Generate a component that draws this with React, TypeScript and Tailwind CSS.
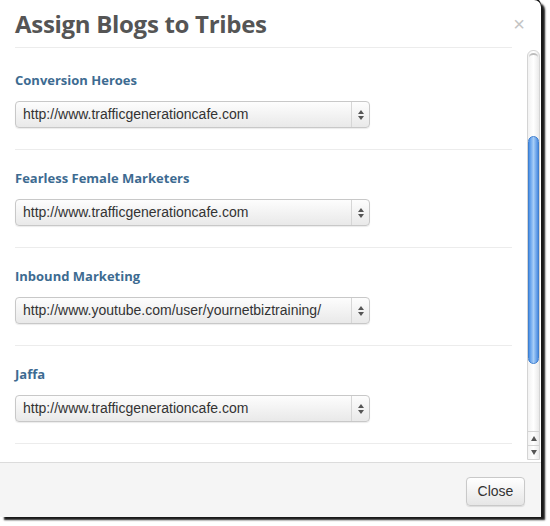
import { useState } from 'react'

const tribes = [
  { name: 'Conversion Heroes', url: 'http://www.trafficgenerationcafe.com' },
  { name: 'Fearless Female Marketers', url: 'http://www.trafficgenerationcafe.com' },
  { name: 'Inbound Marketing', url: 'http://www.youtube.com/user/yournetbiztraining/' },
  { name: 'Jaffa', url: 'http://www.trafficgenerationcafe.com' },
]

function SelectBox({ value }: { value: string }) {
  return (
    <div className="flex h-[27px] w-[355px] items-center rounded-[4px] border border-[#c8c8c8] bg-gradient-to-b from-[#fdfdfd] to-[#e9e9e9] shadow-[0_1px_1px_rgba(0,0,0,0.08)]">
      <span className="flex-1 truncate pl-[7px] font-['Liberation_Sans',Arial,sans-serif] text-[14px] text-[#333]">
        {value}
      </span>
      {/* up / down arrows */}
      <div className="flex h-full w-[18px] flex-col items-center justify-center gap-[2px] border-l border-[#d6d6d6]">
        <svg width="6" height="4" viewBox="0 0 6 4">
          <path d="M3 0L6 4H0z" fill="#555" />
        </svg>
        <svg width="6" height="4" viewBox="0 0 6 4">
          <path d="M0 0h6L3 4z" fill="#555" />
        </svg>
      </div>
    </div>
  )
}

function Scrollbar() {
  return (
    <div className="mt-[2px] flex h-[410px] w-[13px] flex-col rounded-t-[6px] border border-[#d4d4d4] bg-gradient-to-r from-[#f2f2f2] via-white to-[#eaeaea]">
      <div className="relative flex-1">
        {/* top cap */}
        <div className="mx-[1px] mt-[2px] h-[6px] rounded-t-full border-t-2 border-[#bdbdbd]" />
        {/* thumb */}
        <div className="absolute left-0 right-0 top-[85px] h-[228px] rounded-full border border-[#3f7fcf] bg-gradient-to-r from-[#4a90e6] via-[#a6cdf7] to-[#4a8be0]" />
      </div>
      <div className="flex h-[14px] items-center justify-center border-t border-[#d4d4d4]">
        <svg width="6" height="5" viewBox="0 0 6 5">
          <path d="M3 0L6 5H0z" fill="#555" />
        </svg>
      </div>
      <div className="flex h-[14px] items-center justify-center border-t border-[#d4d4d4]">
        <svg width="6" height="5" viewBox="0 0 6 5">
          <path d="M0 0h6L3 5z" fill="#555" />
        </svg>
      </div>
    </div>
  )
}

export default function App() {
  const [open, setOpen] = useState(true)

  return (
    <div className="h-[526px] w-[550px] bg-white">
      {open && (
        <div className="flex h-[517px] w-[541px] flex-col overflow-hidden rounded-tr-[7px] bg-white shadow-[0_-2px_0_#111,4px_3px_2px_rgba(0,0,0,0.9)]">
          {/* Header */}
          <div className="flex h-[47px] shrink-0 items-center justify-between pl-[15px] pr-[16px]">
            <h2 className="font-['Open_Sans',sans-serif] text-[24px] font-bold tracking-[-0.3px] text-[#555]">
              Assign Blogs to Tribes
            </h2>
            <button
              onClick={() => setOpen(false)}
              className="font-['Liberation_Sans',Arial,sans-serif] text-[20px] leading-none text-[#c4c4c4]"
            >
              ×
            </button>
          </div>
          <div className="ml-[15px] h-px w-[497px] shrink-0 bg-[#ececec]" />

          {/* Body */}
          <div className="flex h-[414px] shrink-0">
            <div className="w-[512px] overflow-hidden pl-[15px] pt-[4px]">
              {tribes.map((t) => (
                <div key={t.name} className="pt-[20px]">
                  <div className="font-['Open_Sans',sans-serif] text-[13px] font-bold leading-[16px] text-[#3d6b91]">
                    {t.name}
                  </div>
                  <div className="mt-[13px]">
                    <SelectBox value={t.url} />
                  </div>
                  <div className="mt-[21px] h-px bg-[#ececec]" />
                </div>
              ))}
            </div>
            <div className="ml-[15px]">
              <Scrollbar />
            </div>
          </div>

          {/* Footer */}
          <div className="flex flex-1 items-start justify-end border-t border-[#dcdcdc] bg-[#f5f5f5] pr-[16px] pt-[14px]">
            <button className="h-[29px] w-[59px] rounded-[4px] border border-[#c9c9c9] bg-gradient-to-b from-white to-[#e6e6e6] font-['Liberation_Sans',Arial,sans-serif] text-[14px] text-[#333] shadow-[0_1px_1px_rgba(0,0,0,0.1)]">
              Close
            </button>
          </div>
        </div>
      )}
    </div>
  )
}
